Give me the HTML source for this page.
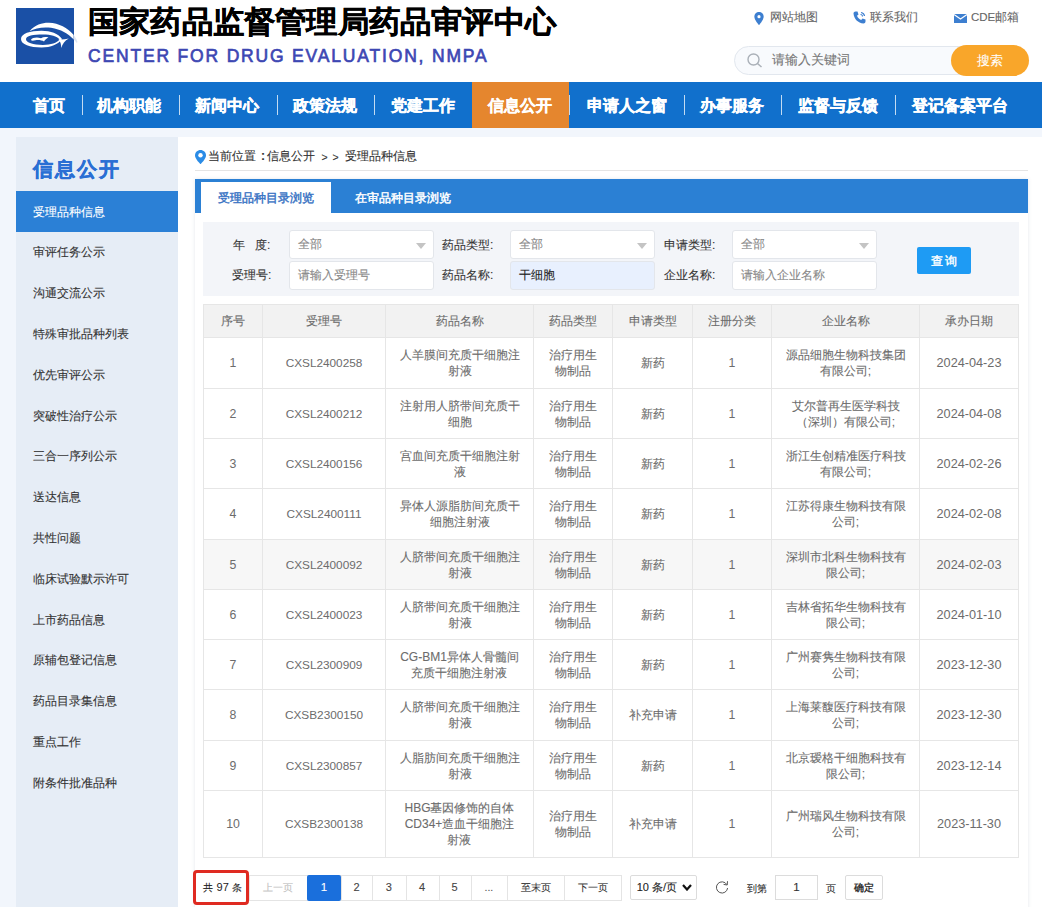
<!DOCTYPE html><html><head><meta charset="utf-8"><style>
*{margin:0;padding:0;box-sizing:border-box}
html,body{width:1042px;height:907px;overflow:hidden;background:#fff}
body{position:relative;font-family:"Liberation Sans",sans-serif;color:#333;-webkit-text-stroke:0.1px currentColor}
.a{position:absolute;white-space:nowrap}
.nav{position:absolute;left:0;top:82px;width:1042px;height:45.5px;background:#1170cc}
.nt{position:absolute;top:0;height:45.5px;line-height:47px;color:#fff;font-size:16px;font-weight:bold;-webkit-text-stroke:0.35px #fff}
.ns{position:absolute;top:13px;width:1px;height:20px;background:rgba(255,255,255,.75)}
.side{position:absolute;left:16px;top:137px;width:162px;height:770px;background:#e6edf6}
.si{position:absolute;left:17px;font-size:12px;color:#333;line-height:14px}
.cell{position:absolute;text-align:center;font-size:12px;color:#6c6c6c;line-height:16px;display:flex;align-items:center;justify-content:center}
.hl{position:absolute;height:1px;background:#e6e6e6}
.vl{position:absolute;width:1px;background:#e6e6e6}
.inp{position:absolute;background:#fff;border:1px solid #e3e6eb;border-radius:3px;height:29px;font-size:12px;color:#888;line-height:27px;padding-left:8px}
.lab{position:absolute;font-size:12px;color:#333;line-height:14px}
.pg{position:absolute;top:875px;height:25.5px;border:1px solid #e4e4e4;font-size:11px;color:#333;line-height:23px;text-align:center}
</style></head><body>
<div class="a" style="left:0;top:127px;width:1042px;height:780px;background:#f2f6fc"></div>
<div class="a" style="left:178px;top:137px;width:864px;height:770px;background:#fff"></div>
<div class="a" style="left:195px;top:179px;width:833px;height:740px;background:#fff;box-shadow:0 0 4px rgba(40,70,110,0.13)"></div>
<svg class="a" style="left:16px;top:8px;overflow:visible" width="58" height="56" viewBox="0 0 58 56">
<rect width="58" height="56" fill="#1a50a6"/>
<path d="M13.5 23.2 C19 16.5 27 14.6 33 14.8 C43 15.2 51.5 20 57.5 26.8 L57.5 31.2 C52 25.8 45 21.3 35 19.8 C27 18.6 19 20.2 13.5 23.2 Z" fill="#fff"/>
<path d="M57.5 26.8 C59 28.6 60.5 31 61.5 34 L60.8 35 C59.8 33.6 58.7 32.3 57.5 31.2 Z" fill="#dde5f2"/>
<path fill-rule="evenodd" d="M5 31 C5 25.5 14 23 25.5 22.8 C35 22.8 42 25.5 46 31 C42 36.5 35 39.5 25.5 39.5 C14 39.5 5 36.5 5 31 Z M10 31.2 C10 34.5 17 36.9 27 36.9 C35 36.9 41 35 43.5 31.6 C41 28.3 35 26.6 27 26.6 C17 26.6 10 28 10 31.2 Z" fill="#fff"/>
<path d="M42.5 31.4 C44.5 33.5 45.2 36.5 45.3 40 C46.5 36 48.8 32.6 52.8 30.6 C49 31.4 45.5 31.8 42.5 31.4 Z" fill="#fff"/>
<path d="M14.8 32 C16.5 29.5 21 29 25 30.2 C27 29 30 28.8 32.5 29.6 C30.5 30.6 29 31.8 28 33.6 C26 32.3 22.5 31.8 19.5 32.3 C17.5 32.6 16 33 14.8 32 Z" fill="#fff"/>
</svg>
<div class="a" style="left:88px;top:2px;font-size:31.2px;font-weight:bold;color:#000;line-height:42px;letter-spacing:0.2px;-webkit-text-stroke:0.4px #000;transform:scaleY(0.955);transform-origin:0 6.2px">国家药品监督管理局药品审评中心</div>
<div class="a" style="left:88px;top:45.8px;font-size:17.5px;font-weight:normal;color:#3d47b3;letter-spacing:1.82px;line-height:20px;-webkit-text-stroke:0.65px #3d47b3">CENTER FOR DRUG EVALUATION, NMPA</div>
<svg class="a" style="left:754px;top:11.5px" width="10" height="13" viewBox="0 0 10 14"><path d="M5 0C2.2 0 0 2.2 0 5c0 3.5 5 9 5 9s5-5.5 5-9C10 2.2 7.8 0 5 0z" fill="#3d7fd0"/><circle cx="5" cy="5" r="1.7" fill="#fff"/></svg>
<div class="a" style="left:770px;top:10px;font-size:11.8px;color:#666;line-height:14px">网站地图</div>
<svg class="a" style="left:853px;top:11px" width="14" height="13" viewBox="0 0 14 13"><path d="M2.5 0.5 L4.5 0.5 L5.5 3.5 L4 4.8 C4.8 6.8 6.2 8.2 8.2 9 L9.5 7.5 L12.5 8.5 L12.5 10.5 C12.5 11.8 11.5 12.5 10.5 12.5 C5 12 1 8 0.5 2.5 C0.5 1.5 1.2 0.5 2.5 0.5Z" fill="#3d7fd0"/><path d="M8 1.5 A4 4 0 0 1 11.5 5" stroke="#3d7fd0" stroke-width="1.2" fill="none"/><path d="M7.5 3.5 A2 2 0 0 1 9.5 5.5" stroke="#3d7fd0" stroke-width="1.1" fill="none"/></svg>
<div class="a" style="left:870px;top:10px;font-size:11.8px;color:#666;line-height:14px">联系我们</div>
<svg class="a" style="left:954px;top:14px" width="13" height="9" viewBox="0 0 13 9"><rect width="13" height="9" fill="#3d7fd0"/><path d="M0 0.5 L6.5 5 L13 0.5" stroke="#fff" stroke-width="1.1" fill="none"/></svg>
<div class="a" style="left:971px;top:10px;font-size:11.5px;color:#666;line-height:14px">CDE邮箱</div>
<div class="a" style="left:734px;top:46px;width:290px;height:29px;border:1px solid #e2e7ee;border-radius:15px;background:#f8fafd"></div>
<svg class="a" style="left:747px;top:53px" width="17" height="15" viewBox="0 0 17 15"><circle cx="6.5" cy="6.5" r="5.5" stroke="#aab0b8" stroke-width="1.4" fill="none"/><path d="M10.5 10.5 L14.5 14" stroke="#aab0b8" stroke-width="1.5"/></svg>
<div class="a" style="left:772px;top:52px;font-size:12.6px;color:#777;line-height:16px">请输入关键词</div>
<div class="a" style="left:951px;top:45px;width:77.5px;height:30.5px;border-radius:16px;background:#f9a62a;color:#fff;font-size:13px;text-align:center;line-height:32px">搜索</div>
<div class="nav">
<div class="a" style="left:472.3px;top:0;width:97.1px;height:45.5px;background:#e5862e"></div>
<div class="nt" style="left:33.1px">首页</div>
<div class="nt" style="left:97.3px">机构职能</div>
<div class="nt" style="left:195.0px">新闻中心</div>
<div class="nt" style="left:293.0px">政策法规</div>
<div class="nt" style="left:391.0px">党建工作</div>
<div class="nt" style="left:488.0px">信息公开</div>
<div class="nt" style="left:586.7px">申请人之窗</div>
<div class="nt" style="left:700.3px">办事服务</div>
<div class="nt" style="left:798.2px">监督与反馈</div>
<div class="nt" style="left:911.8px">登记备案平台</div>
<div class="ns" style="left:81.5px"></div>
<div class="ns" style="left:178.5px"></div>
<div class="ns" style="left:277.0px"></div>
<div class="ns" style="left:374.4px"></div>
<div class="ns" style="left:569.4px"></div>
<div class="ns" style="left:683.8px"></div>
<div class="ns" style="left:781.0px"></div>
<div class="ns" style="left:895.3px"></div>
</div>
<div class="side">
<div class="a" style="left:17px;top:19px;font-size:20.3px;font-weight:bold;color:#2a6fd4;letter-spacing:2px;line-height:26px;-webkit-text-stroke:0.45px #2a6fd4">信息公开</div>
<div class="a" style="left:0;top:54px;width:162px;height:40.7px;background:#2b80d6"></div>
<div class="si" style="top:67.5px;color:#fff">受理品种信息</div>
<div class="si" style="top:108.3px;color:#333">审评任务公示</div>
<div class="si" style="top:149.1px;color:#333">沟通交流公示</div>
<div class="si" style="top:189.9px;color:#333">特殊审批品种列表</div>
<div class="si" style="top:230.7px;color:#333">优先审评公示</div>
<div class="si" style="top:271.5px;color:#333">突破性治疗公示</div>
<div class="si" style="top:312.3px;color:#333">三合一序列公示</div>
<div class="si" style="top:353.1px;color:#333">送达信息</div>
<div class="si" style="top:393.9px;color:#333">共性问题</div>
<div class="si" style="top:434.7px;color:#333">临床试验默示许可</div>
<div class="si" style="top:475.5px;color:#333">上市药品信息</div>
<div class="si" style="top:516.3px;color:#333">原辅包登记信息</div>
<div class="si" style="top:557.1px;color:#333">药品目录集信息</div>
<div class="si" style="top:597.9px;color:#333">重点工作</div>
<div class="si" style="top:638.7px;color:#333">附条件批准品种</div>
</div>
<svg class="a" style="left:195px;top:150px" width="11" height="14" viewBox="0 0 11 14"><path d="M5.5 0C2.5 0 0 2.4 0 5.4c0 3.6 5.5 8.6 5.5 8.6s5.5-5 5.5-8.6C11 2.4 8.5 0 5.5 0z" fill="#2b8ce6"/><circle cx="5.5" cy="5.3" r="2.2" fill="#fff"/></svg>
<div class="a" style="left:208px;top:149px;font-size:12.2px;color:#333;line-height:14px">当前位置</div>
<div class="a" style="left:261px;top:149px;font-size:12.2px;color:#333;line-height:14px;font-weight:bold">:</div>
<div class="a" style="left:267px;top:149px;font-size:12.2px;color:#333;line-height:14px">信息公开</div>
<div class="a" style="left:321.5px;top:150px;font-size:10.5px;color:#333;line-height:14px;letter-spacing:1px">&gt; &gt;</div>
<div class="a" style="left:344.8px;top:149px;font-size:12.1px;color:#333;line-height:14px">受理品种信息</div>
<div class="hl" style="left:195px;top:170px;width:833px;background:#e4e4e4"></div>
<div class="a" style="left:195px;top:179px;width:833px;height:34px;background:#2b80d4"></div>
<div class="a" style="left:201px;top:182px;width:130px;height:31px;background:#fff"></div>
<div class="a" style="left:218px;top:191px;font-size:12px;color:#3a74c4;line-height:14px;-webkit-text-stroke:0.45px #3a74c4">受理品种目录浏览</div>
<div class="a" style="left:355px;top:191px;font-size:12px;color:#fff;line-height:14px;-webkit-text-stroke:0.45px #fff">在审品种目录浏览</div>
<div class="a" style="left:203px;top:222px;width:816px;height:74px;background:#f3f5f9"></div>
<div class="lab" style="left:233.0px;top:238.0px">年&nbsp;&nbsp;&nbsp;度:</div>
<div class="lab" style="left:232.0px;top:268.0px">受理号:</div>
<div class="inp" style="left:288.8px;top:230.0px;width:145px;color:#888;background:#fff">全部<svg class="a" style="right:7px;top:11.5px" width="10" height="6" viewBox="0 0 10 6"><path d="M0 0 L10 0 L5 6Z" fill="#c4c4c4"/></svg></div>
<div class="inp" style="left:288.8px;top:261.0px;width:145px;color:#888;background:#fff">请输入受理号</div>
<div class="lab" style="left:442.0px;top:238.0px">药品类型:</div>
<div class="lab" style="left:442.0px;top:268.0px">药品名称:</div>
<div class="inp" style="left:510.0px;top:230.0px;width:145px;color:#888;background:#fff">全部<svg class="a" style="right:7px;top:11.5px" width="10" height="6" viewBox="0 0 10 6"><path d="M0 0 L10 0 L5 6Z" fill="#c4c4c4"/></svg></div>
<div class="inp" style="left:510.0px;top:261.0px;width:145px;color:#222;background:#e8f0fe">干细胞</div>
<div class="lab" style="left:664.0px;top:238.0px">申请类型:</div>
<div class="lab" style="left:664.0px;top:268.0px">企业名称:</div>
<div class="inp" style="left:732.4px;top:230.0px;width:145px;color:#888;background:#fff">全部<svg class="a" style="right:7px;top:11.5px" width="10" height="6" viewBox="0 0 10 6"><path d="M0 0 L10 0 L5 6Z" fill="#c4c4c4"/></svg></div>
<div class="inp" style="left:732.4px;top:261.0px;width:145px;color:#888;background:#fff">请输入企业名称</div>
<div class="a" style="left:917px;top:247px;width:54px;height:27px;background:#1e9bf4;border-radius:2px;color:#fff;font-size:12px;text-align:center;line-height:29.5px;letter-spacing:2.5px;text-indent:2px;-webkit-text-stroke:0.4px #fff">查询</div>
<div class="a" style="left:203px;top:304px;width:816px;height:33px;background:#f2f2f2"></div>
<div class="a" style="left:203px;top:539px;width:816px;height:50px;background:#f7f7f7"></div>
<div class="hl" style="left:203px;top:304.0px;width:816px"></div>
<div class="hl" style="left:203px;top:337.0px;width:816px"></div>
<div class="hl" style="left:203px;top:388.0px;width:816px"></div>
<div class="hl" style="left:203px;top:438.0px;width:816px"></div>
<div class="hl" style="left:203px;top:488.0px;width:816px"></div>
<div class="hl" style="left:203px;top:539.0px;width:816px"></div>
<div class="hl" style="left:203px;top:589.0px;width:816px"></div>
<div class="hl" style="left:203px;top:639.0px;width:816px"></div>
<div class="hl" style="left:203px;top:689.0px;width:816px"></div>
<div class="hl" style="left:203px;top:740.0px;width:816px"></div>
<div class="hl" style="left:203px;top:790.0px;width:816px"></div>
<div class="hl" style="left:203px;top:857.0px;width:816px"></div>
<div class="vl" style="left:203.0px;top:304px;height:553px"></div>
<div class="vl" style="left:262.0px;top:304px;height:553px"></div>
<div class="vl" style="left:385.0px;top:304px;height:553px"></div>
<div class="vl" style="left:533.0px;top:304px;height:553px"></div>
<div class="vl" style="left:612.0px;top:304px;height:553px"></div>
<div class="vl" style="left:692.0px;top:304px;height:553px"></div>
<div class="vl" style="left:771.0px;top:304px;height:553px"></div>
<div class="vl" style="left:919.0px;top:304px;height:553px"></div>
<div class="vl" style="left:1018.0px;top:304px;height:553px"></div>
<div class="cell" style="left:204.0px;top:305.0px;width:58.0px;height:32.0px">序号</div>
<div class="cell" style="left:263.0px;top:305.0px;width:122.0px;height:32.0px">受理号</div>
<div class="cell" style="left:386.0px;top:305.0px;width:147.0px;height:32.0px">药品名称</div>
<div class="cell" style="left:534.0px;top:305.0px;width:78.0px;height:32.0px">药品类型</div>
<div class="cell" style="left:613.0px;top:305.0px;width:79.0px;height:32.0px">申请类型</div>
<div class="cell" style="left:693.0px;top:305.0px;width:78.0px;height:32.0px">注册分类</div>
<div class="cell" style="left:772.0px;top:305.0px;width:147.0px;height:32.0px">企业名称</div>
<div class="cell" style="left:920.0px;top:305.0px;width:98.0px;height:32.0px">承办日期</div>
<div class="cell" style="left:204.0px;top:338.0px;width:58.0px;height:50.0px"><span style="font-size:12.3px;-webkit-text-stroke:0">1</span></div>
<div class="cell" style="left:263.0px;top:338.0px;width:122.0px;height:50.0px"><span style="font-size:11.8px;-webkit-text-stroke:0">CXSL2400258</span></div>
<div class="cell" style="left:386.0px;top:338.0px;width:147.0px;height:50.0px">人羊膜间充质干细胞注<br>射液</div>
<div class="cell" style="left:534.0px;top:338.0px;width:78.0px;height:50.0px">治疗用生<br>物制品</div>
<div class="cell" style="left:613.0px;top:338.0px;width:79.0px;height:50.0px">新药</div>
<div class="cell" style="left:693.0px;top:338.0px;width:78.0px;height:50.0px"><span style="font-size:12.3px;-webkit-text-stroke:0">1</span></div>
<div class="cell" style="left:772.0px;top:338.0px;width:147.0px;height:50.0px">源品细胞生物科技集团<br>有限公司;</div>
<div class="cell" style="left:920.0px;top:338.0px;width:98.0px;height:50.0px"><span style="font-size:12.7px;-webkit-text-stroke:0">2024-04-23</span></div>
<div class="cell" style="left:204.0px;top:389.0px;width:58.0px;height:49.0px"><span style="font-size:12.3px;-webkit-text-stroke:0">2</span></div>
<div class="cell" style="left:263.0px;top:389.0px;width:122.0px;height:49.0px"><span style="font-size:11.8px;-webkit-text-stroke:0">CXSL2400212</span></div>
<div class="cell" style="left:386.0px;top:389.0px;width:147.0px;height:49.0px">注射用人脐带间充质干<br>细胞</div>
<div class="cell" style="left:534.0px;top:389.0px;width:78.0px;height:49.0px">治疗用生<br>物制品</div>
<div class="cell" style="left:613.0px;top:389.0px;width:79.0px;height:49.0px">新药</div>
<div class="cell" style="left:693.0px;top:389.0px;width:78.0px;height:49.0px"><span style="font-size:12.3px;-webkit-text-stroke:0">1</span></div>
<div class="cell" style="left:772.0px;top:389.0px;width:147.0px;height:49.0px">艾尔普再生医学科技<br>（深圳）有限公司;</div>
<div class="cell" style="left:920.0px;top:389.0px;width:98.0px;height:49.0px"><span style="font-size:12.7px;-webkit-text-stroke:0">2024-04-08</span></div>
<div class="cell" style="left:204.0px;top:439.0px;width:58.0px;height:49.0px"><span style="font-size:12.3px;-webkit-text-stroke:0">3</span></div>
<div class="cell" style="left:263.0px;top:439.0px;width:122.0px;height:49.0px"><span style="font-size:11.8px;-webkit-text-stroke:0">CXSL2400156</span></div>
<div class="cell" style="left:386.0px;top:439.0px;width:147.0px;height:49.0px">宫血间充质干细胞注射<br>液</div>
<div class="cell" style="left:534.0px;top:439.0px;width:78.0px;height:49.0px">治疗用生<br>物制品</div>
<div class="cell" style="left:613.0px;top:439.0px;width:79.0px;height:49.0px">新药</div>
<div class="cell" style="left:693.0px;top:439.0px;width:78.0px;height:49.0px"><span style="font-size:12.3px;-webkit-text-stroke:0">1</span></div>
<div class="cell" style="left:772.0px;top:439.0px;width:147.0px;height:49.0px">浙江生创精准医疗科技<br>有限公司;</div>
<div class="cell" style="left:920.0px;top:439.0px;width:98.0px;height:49.0px"><span style="font-size:12.7px;-webkit-text-stroke:0">2024-02-26</span></div>
<div class="cell" style="left:204.0px;top:489.0px;width:58.0px;height:50.0px"><span style="font-size:12.3px;-webkit-text-stroke:0">4</span></div>
<div class="cell" style="left:263.0px;top:489.0px;width:122.0px;height:50.0px"><span style="font-size:11.8px;-webkit-text-stroke:0">CXSL2400111</span></div>
<div class="cell" style="left:386.0px;top:489.0px;width:147.0px;height:50.0px">异体人源脂肪间充质干<br>细胞注射液</div>
<div class="cell" style="left:534.0px;top:489.0px;width:78.0px;height:50.0px">治疗用生<br>物制品</div>
<div class="cell" style="left:613.0px;top:489.0px;width:79.0px;height:50.0px">新药</div>
<div class="cell" style="left:693.0px;top:489.0px;width:78.0px;height:50.0px"><span style="font-size:12.3px;-webkit-text-stroke:0">1</span></div>
<div class="cell" style="left:772.0px;top:489.0px;width:147.0px;height:50.0px">江苏得康生物科技有限<br>公司;</div>
<div class="cell" style="left:920.0px;top:489.0px;width:98.0px;height:50.0px"><span style="font-size:12.7px;-webkit-text-stroke:0">2024-02-08</span></div>
<div class="cell" style="left:204.0px;top:540.0px;width:58.0px;height:49.0px"><span style="font-size:12.3px;-webkit-text-stroke:0">5</span></div>
<div class="cell" style="left:263.0px;top:540.0px;width:122.0px;height:49.0px"><span style="font-size:11.8px;-webkit-text-stroke:0">CXSL2400092</span></div>
<div class="cell" style="left:386.0px;top:540.0px;width:147.0px;height:49.0px">人脐带间充质干细胞注<br>射液</div>
<div class="cell" style="left:534.0px;top:540.0px;width:78.0px;height:49.0px">治疗用生<br>物制品</div>
<div class="cell" style="left:613.0px;top:540.0px;width:79.0px;height:49.0px">新药</div>
<div class="cell" style="left:693.0px;top:540.0px;width:78.0px;height:49.0px"><span style="font-size:12.3px;-webkit-text-stroke:0">1</span></div>
<div class="cell" style="left:772.0px;top:540.0px;width:147.0px;height:49.0px">深圳市北科生物科技有<br>限公司;</div>
<div class="cell" style="left:920.0px;top:540.0px;width:98.0px;height:49.0px"><span style="font-size:12.7px;-webkit-text-stroke:0">2024-02-03</span></div>
<div class="cell" style="left:204.0px;top:590.0px;width:58.0px;height:49.0px"><span style="font-size:12.3px;-webkit-text-stroke:0">6</span></div>
<div class="cell" style="left:263.0px;top:590.0px;width:122.0px;height:49.0px"><span style="font-size:11.8px;-webkit-text-stroke:0">CXSL2400023</span></div>
<div class="cell" style="left:386.0px;top:590.0px;width:147.0px;height:49.0px">人脐带间充质干细胞注<br>射液</div>
<div class="cell" style="left:534.0px;top:590.0px;width:78.0px;height:49.0px">治疗用生<br>物制品</div>
<div class="cell" style="left:613.0px;top:590.0px;width:79.0px;height:49.0px">新药</div>
<div class="cell" style="left:693.0px;top:590.0px;width:78.0px;height:49.0px"><span style="font-size:12.3px;-webkit-text-stroke:0">1</span></div>
<div class="cell" style="left:772.0px;top:590.0px;width:147.0px;height:49.0px">吉林省拓华生物科技有<br>限公司;</div>
<div class="cell" style="left:920.0px;top:590.0px;width:98.0px;height:49.0px"><span style="font-size:12.7px;-webkit-text-stroke:0">2024-01-10</span></div>
<div class="cell" style="left:204.0px;top:640.0px;width:58.0px;height:49.0px"><span style="font-size:12.3px;-webkit-text-stroke:0">7</span></div>
<div class="cell" style="left:263.0px;top:640.0px;width:122.0px;height:49.0px"><span style="font-size:11.8px;-webkit-text-stroke:0">CXSL2300909</span></div>
<div class="cell" style="left:386.0px;top:640.0px;width:147.0px;height:49.0px">CG-BM1异体人骨髓间<br>充质干细胞注射液</div>
<div class="cell" style="left:534.0px;top:640.0px;width:78.0px;height:49.0px">治疗用生<br>物制品</div>
<div class="cell" style="left:613.0px;top:640.0px;width:79.0px;height:49.0px">新药</div>
<div class="cell" style="left:693.0px;top:640.0px;width:78.0px;height:49.0px"><span style="font-size:12.3px;-webkit-text-stroke:0">1</span></div>
<div class="cell" style="left:772.0px;top:640.0px;width:147.0px;height:49.0px">广州赛隽生物科技有限<br>公司;</div>
<div class="cell" style="left:920.0px;top:640.0px;width:98.0px;height:49.0px"><span style="font-size:12.7px;-webkit-text-stroke:0">2023-12-30</span></div>
<div class="cell" style="left:204.0px;top:690.0px;width:58.0px;height:50.0px"><span style="font-size:12.3px;-webkit-text-stroke:0">8</span></div>
<div class="cell" style="left:263.0px;top:690.0px;width:122.0px;height:50.0px"><span style="font-size:11.8px;-webkit-text-stroke:0">CXSB2300150</span></div>
<div class="cell" style="left:386.0px;top:690.0px;width:147.0px;height:50.0px">人脐带间充质干细胞注<br>射液</div>
<div class="cell" style="left:534.0px;top:690.0px;width:78.0px;height:50.0px">治疗用生<br>物制品</div>
<div class="cell" style="left:613.0px;top:690.0px;width:79.0px;height:50.0px">补充申请</div>
<div class="cell" style="left:693.0px;top:690.0px;width:78.0px;height:50.0px"><span style="font-size:12.3px;-webkit-text-stroke:0">1</span></div>
<div class="cell" style="left:772.0px;top:690.0px;width:147.0px;height:50.0px">上海莱馥医疗科技有限<br>公司;</div>
<div class="cell" style="left:920.0px;top:690.0px;width:98.0px;height:50.0px"><span style="font-size:12.7px;-webkit-text-stroke:0">2023-12-30</span></div>
<div class="cell" style="left:204.0px;top:741.0px;width:58.0px;height:49.0px"><span style="font-size:12.3px;-webkit-text-stroke:0">9</span></div>
<div class="cell" style="left:263.0px;top:741.0px;width:122.0px;height:49.0px"><span style="font-size:11.8px;-webkit-text-stroke:0">CXSL2300857</span></div>
<div class="cell" style="left:386.0px;top:741.0px;width:147.0px;height:49.0px">人脂肪间充质干细胞注<br>射液</div>
<div class="cell" style="left:534.0px;top:741.0px;width:78.0px;height:49.0px">治疗用生<br>物制品</div>
<div class="cell" style="left:613.0px;top:741.0px;width:79.0px;height:49.0px">新药</div>
<div class="cell" style="left:693.0px;top:741.0px;width:78.0px;height:49.0px"><span style="font-size:12.3px;-webkit-text-stroke:0">1</span></div>
<div class="cell" style="left:772.0px;top:741.0px;width:147.0px;height:49.0px">北京瑷格干细胞科技有<br>限公司;</div>
<div class="cell" style="left:920.0px;top:741.0px;width:98.0px;height:49.0px"><span style="font-size:12.7px;-webkit-text-stroke:0">2023-12-14</span></div>
<div class="cell" style="left:204.0px;top:791.0px;width:58.0px;height:66.0px"><span style="font-size:12.3px;-webkit-text-stroke:0">10</span></div>
<div class="cell" style="left:263.0px;top:791.0px;width:122.0px;height:66.0px"><span style="font-size:11.8px;-webkit-text-stroke:0">CXSB2300138</span></div>
<div class="cell" style="left:386.0px;top:791.0px;width:147.0px;height:66.0px">HBG基因修饰的自体<br>CD34+造血干细胞注<br>射液</div>
<div class="cell" style="left:534.0px;top:791.0px;width:78.0px;height:66.0px">治疗用生<br>物制品</div>
<div class="cell" style="left:613.0px;top:791.0px;width:79.0px;height:66.0px">补充申请</div>
<div class="cell" style="left:693.0px;top:791.0px;width:78.0px;height:66.0px"><span style="font-size:12.3px;-webkit-text-stroke:0">1</span></div>
<div class="cell" style="left:772.0px;top:791.0px;width:147.0px;height:66.0px">广州瑞风生物科技有限<br>公司;</div>
<div class="cell" style="left:920.0px;top:791.0px;width:98.0px;height:66.0px"><span style="font-size:12.7px;-webkit-text-stroke:0">2023-11-30</span></div>
<div class="a" style="left:192.5px;top:870.3px;width:56px;height:35px;border:3px solid #df2a21;border-radius:4px;background:#fff"></div>
<div class="a" style="left:202.8px;top:881px;font-size:10.2px;color:#222;line-height:13px">共</div>
<div class="a" style="left:216.6px;top:881px;font-size:11px;color:#222;line-height:13px;-webkit-text-stroke:0">97</div>
<div class="a" style="left:231.5px;top:881px;font-size:10.2px;color:#222;line-height:13px">条</div>
<div class="a" style="left:248.5px;top:875px;width:373px;height:25.5px;border:1px solid #e4e4e4"></div>
<div class="vl" style="left:307.1px;top:875px;height:25.5px;background:#e4e4e4"></div>
<div class="vl" style="left:340.8px;top:875px;height:25.5px;background:#e4e4e4"></div>
<div class="vl" style="left:372.3px;top:875px;height:25.5px;background:#e4e4e4"></div>
<div class="vl" style="left:405.5px;top:875px;height:25.5px;background:#e4e4e4"></div>
<div class="vl" style="left:438.7px;top:875px;height:25.5px;background:#e4e4e4"></div>
<div class="vl" style="left:470.5px;top:875px;height:25.5px;background:#e4e4e4"></div>
<div class="vl" style="left:507.3px;top:875px;height:25.5px;background:#e4e4e4"></div>
<div class="vl" style="left:564.3px;top:875px;height:25.5px;background:#e4e4e4"></div>
<div class="a" style="left:249.0px;top:875px;width:58.0px;height:25.5px;line-height:25px;text-align:center;font-size:10.3px;color:#c2c2c2">上一页</div>
<div class="a" style="left:307.1px;top:874.9px;width:33.7px;height:25.7px;background:#1a6fdc;border-radius:2px"></div>
<div class="a" style="left:307.0px;top:875px;width:34.0px;height:25.5px;line-height:25px;text-align:center;font-size:11.5px;color:#fff">1</div>
<div class="a" style="left:341.0px;top:875px;width:31.0px;height:25.5px;line-height:25px;text-align:center;font-size:11px;color:#444">2</div>
<div class="a" style="left:372.0px;top:875px;width:33.5px;height:25.5px;line-height:25px;text-align:center;font-size:11px;color:#444">3</div>
<div class="a" style="left:405.5px;top:875px;width:33.2px;height:25.5px;line-height:25px;text-align:center;font-size:11px;color:#444">4</div>
<div class="a" style="left:438.7px;top:875px;width:31.8px;height:25.5px;line-height:25px;text-align:center;font-size:11px;color:#444">5</div>
<div class="a" style="left:470.5px;top:875px;width:36.8px;height:25.5px;line-height:25px;text-align:center;font-size:10.5px;color:#555">...</div>
<div class="a" style="left:507.3px;top:875px;width:57.0px;height:25.5px;line-height:25px;text-align:center;font-size:10.3px;color:#333">至末页</div>
<div class="a" style="left:564.3px;top:875px;width:57.1px;height:25.5px;line-height:25px;text-align:center;font-size:10.3px;color:#333">下一页</div>
<div class="a" style="left:630.2px;top:875.3px;width:66.4px;height:25px;border:1px solid #dcdcdc;border-radius:2px"></div>
<div class="a" style="left:636.7px;top:881px;font-size:11px;color:#222;line-height:13px">10 条/页</div>
<svg class="a" style="left:682.3px;top:884px" width="10" height="7" viewBox="0 0 10 7"><path d="M1 1 L5 5.5 L9 1" stroke="#111" stroke-width="2.2" fill="none"/></svg>
<svg class="a" style="left:714.6px;top:879.5px" width="14" height="14" viewBox="0 0 14 14"><path d="M11.8 4.5 A5.6 5.6 0 1 0 12.6 8" stroke="#555" stroke-width="1" fill="none"/><path d="M12.5 1.2 L12.2 5 L8.6 4.4" stroke="#555" stroke-width="1" fill="none"/></svg>
<div class="a" style="left:746.8px;top:881.5px;font-size:9.9px;color:#333;line-height:13px">到第</div>
<div class="a" style="left:775.3px;top:875.3px;width:42.5px;height:25px;border:1px solid #dcdcdc;text-align:center;font-size:11.5px;line-height:23px;color:#333">1</div>
<div class="a" style="left:826.4px;top:881.5px;font-size:10px;color:#333;line-height:13px">页</div>
<div class="a" style="left:845.2px;top:875.3px;width:38.2px;height:25px;border:1px solid #dcdcdc;border-radius:2px;text-align:center;font-size:9.8px;line-height:24px;color:#222;-webkit-text-stroke:0.3px #222">确定</div>
</body></html>
